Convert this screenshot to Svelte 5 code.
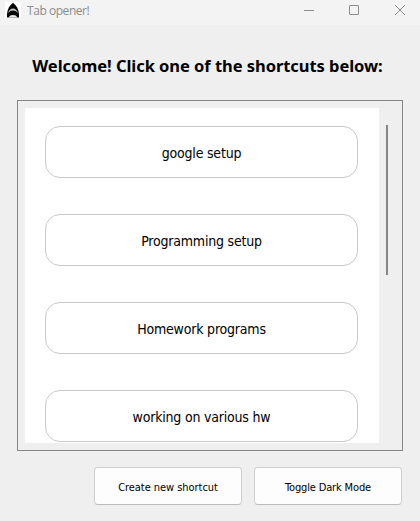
<script lang="ts">
    const shortcuts = [
        "google setup",
        "Programming setup",
        "Homework programs",
        "working on various hw",
    ];

    let dark = $state(false);
</script>

<svelte:head>
    <title>Tab opener!</title>
</svelte:head>

<div class="window" class:dark>
    <header class="titlebar">
        <svg class="app-icon" viewBox="0 0 16 16">
            <rect width="16" height="16" fill="#fff" />
            <path d="M2 15.5V12C2.4 7 4.5 3.5 8 .8C11.5 3.5 13.6 7 14 12V15.5Z" fill="#050505" />
            <path d="M3 11C4.2 8 5.6 6.4 8 6.4S11.8 8 13 11C11.4 9.3 9.8 8.5 8 8.5S4.6 9.3 3 11Z" fill="#c4c4c4" />
            <path d="M3.6 15.5C4.4 13.8 5.8 13 8 13S11.6 13.8 12.4 15.5Z" fill="#e8e8e8" />
        </svg>
        <span class="title">Tab opener!</span>
        <div class="controls">
            <svg viewBox="0 0 12 12"><path d="M2 6.5H12" /></svg>
            <svg viewBox="0 0 12 12"><rect x="1.5" y="1.5" width="9" height="9" rx="0.5" /></svg>
            <svg viewBox="0 0 12 12"><path d="M1 1L11 11M11 1L1 11" /></svg>
        </div>
    </header>

    <h1>Welcome! Click one of the shortcuts below:</h1>

    <div class="frame">
        <div class="list">
            {#each shortcuts as shortcut}
                <button class="shortcut">{shortcut}</button>
            {/each}
        </div>
        <div class="scrollbar"></div>
    </div>

    <footer>
        <button>Create new shortcut</button>
        <button class="toggle" onclick={() => (dark = !dark)}>Toggle Dark Mode</button>
    </footer>
</div>

<style>
    :global(body) {
        margin: 0;
        overflow: hidden;
    }

    .window {
        box-sizing: border-box;
        width: 420px;
        height: 521px;
        background: #efefef;
        color: #000;
        font-family: "DejaVu Sans Condensed", "DejaVu Sans", sans-serif;
    }

    .titlebar {
        display: flex;
        box-sizing: border-box;
        height: 25px;
        padding: 2px 14px 0 5px;
        background: #f3f3f3;
    }

    .app-icon {
        width: 16px;
        height: 16px;
    }

    .title {
        margin-left: 6px;
        color: #8c8c8c;
        font-family: "Open Sans", sans-serif;
        font-size: 12px;
        line-height: 17px;
        letter-spacing: -0.45px;
    }

    .controls {
        display: flex;
        gap: 34px;
        margin: 2px 0 0 auto;
    }

    .controls svg {
        width: 12px;
        height: 12px;
        fill: none;
        stroke: #8c8c8c;
    }

    h1 {
        margin: 0;
        padding: 29px 5px 0 0;
        height: 46px;
        font-family: "Noto Sans", sans-serif;
        font-size: 16.5px;
        font-weight: 700;
        line-height: 24px;
        letter-spacing: -0.05px;
        text-align: center;
        white-space: nowrap;
    }

    .frame {
        display: flex;
        box-sizing: border-box;
        width: 386px;
        height: 351px;
        margin-left: 17px;
        padding: 7px;
        border: 1px solid #85858a;
    }

    .list {
        box-sizing: border-box;
        width: 354px;
        height: 335px;
        padding: 18px 21px 0 20px;
        overflow: hidden;
        background: #fff;
    }

    button {
        display: block;
        box-sizing: border-box;
        padding: 2px 0 0;
        border: 1px solid #c9c9c9;
        background: #fff;
        color: inherit;
        font-family: inherit;
    }

    .shortcut {
        width: 313px;
        height: 52px;
        margin-bottom: 36px;
        border-radius: 15px;
        font-size: 14px;
        letter-spacing: -0.2px;
    }

    .scrollbar {
        width: 2px;
        height: 150px;
        margin: 17px 0 0 7px;
        background: #868686;
    }

    footer {
        display: flex;
        justify-content: flex-end;
        gap: 12px;
        padding: 16px 18px 0 0;
    }

    footer button {
        width: 148px;
        height: 38px;
        border-color: #d0d0d0;
        border-bottom-color: #bcbcbc;
        border-radius: 4px;
        background: #fdfdfd;
        font-size: 11px;
        letter-spacing: -0.05px;
    }

    .toggle {
        letter-spacing: -0.15px;
    }

    .dark {
        background: #202020;
        color: #eee;
    }

    .dark .titlebar,
    .dark .list,
    .dark button {
        background: #2b2b2b;
    }
</style>
